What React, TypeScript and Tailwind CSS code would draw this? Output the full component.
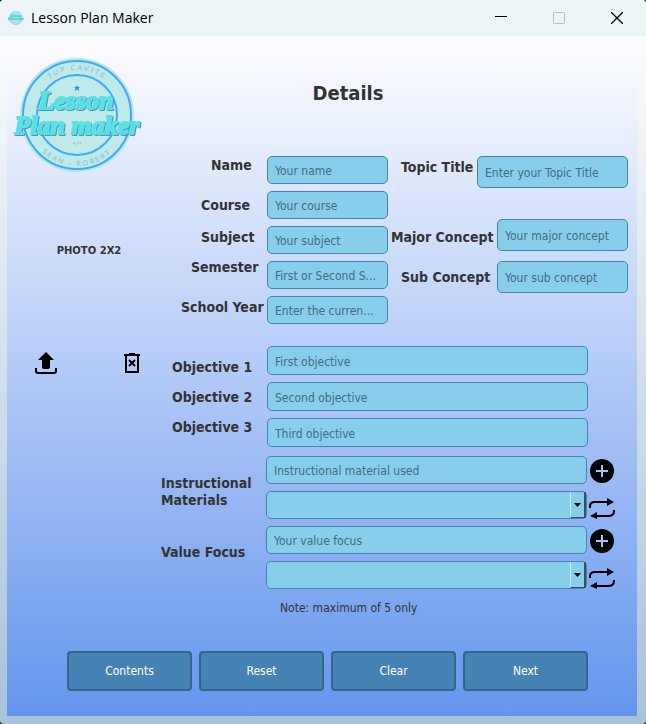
import type { ReactNode } from "react";

const labelText = "font-bold text-[14px] text-[#333333] whitespace-nowrap";
const fieldBox =
  "block w-full min-w-0 rounded-[5px] border border-[#4682b4] bg-[#87ceeb] pl-[7px] pr-1 pt-[2px] text-[12px] text-[#333333] placeholder:text-[#466b7e] placeholder:opacity-100 outline-none";

function Field({ id, hint, size = "h-7" }: { id: string; hint: string; size?: string }) {
  return <input id={id} type="text" placeholder={hint} className={`${fieldBox} ${size}`} />;
}

function Picker({ label }: { label: string }) {
  return (
    <div className="relative w-full">
      <select aria-label={label} className="block h-7 w-full appearance-none rounded-[5px] border border-[#4682b4] bg-[#87ceeb] outline-none" />
      <span className="pointer-events-none absolute right-px top-px flex h-[26px] w-4 items-center justify-center border-b border-l border-r-2 border-b-[#355260] border-l-[#b9ecff] border-r-[#355260]">
        <svg width="7" height="4" viewBox="0 0 7 4">
          <path d="M0 0H7L3.5 4Z" fill="#000" />
        </svg>
      </span>
    </div>
  );
}

function IconButton({ label, children }: { label: string; children: ReactNode }) {
  return (
    <button type="button" aria-label={label} className="flex shrink-0 items-center justify-center">
      {children}
    </button>
  );
}

function PlusIcon() {
  return (
    <svg width="24" height="24" viewBox="0 0 24 24">
      <circle cx="12" cy="12" r="12" fill="#000" />
      <path d="M12 6V18M6 12H18" stroke="#a5c3f5" strokeWidth="2" />
    </svg>
  );
}

function SwapIcon() {
  return (
    <svg width="26" height="22" viewBox="0 0 26 22" fill="none" stroke="#000" strokeWidth="2">
      <path d="M1 11V9Q1 5 6 5H20" />
      <path d="M18 1L25 5L18 9Z" fill="#000" stroke="none" />
      <path d="M25 13V14Q25 19 19 19H6" />
      <path d="M8 15L1 19L8 22Z" fill="#000" stroke="none" />
    </svg>
  );
}

function Logo({ className }: { className: string }) {
  return (
    <svg className={className} viewBox="0 0 130 114" role="img" aria-label="Lesson Plan Maker logo">
      <defs>
        <path id="ringTop" d="M19 57A45 45 0 0 1 109 57" />
        <path id="ringBottom" d="M13 57A51 51 0 0 0 115 57" />
      </defs>
      <circle cx="64" cy="57" r="57" fill="#bce3e6" />
      <circle cx="64" cy="57" r="54" fill="#c0e9ea" stroke="#38aeff" strokeWidth="2" />
      <circle cx="64" cy="57" r="40" fill="#c0e9ea" stroke="#38aeff" strokeWidth="2" />
      <g fill="#8db9d2" fontFamily="Lato, sans-serif" fontSize="7" letterSpacing="2" textAnchor="middle">
        <text><textPath href="#ringTop" startOffset="50%">TUP CAVITE</textPath></text>
        <text><textPath href="#ringBottom" startOffset="50%">SEAN - ROBERT</textPath></text>
      </g>
      <path d="M64 27L65 29H67L65.500 30.500L66 33L64 31.500L62 33L62.500 30.500L61 29H63Z" fill="#2f93da" />
      <text x="64" y="87" textAnchor="middle" fontSize="6" fontFamily="Lato, sans-serif" fill="#7da6c4">&lt;/&gt;</text>
      <g
        className="drop-shadow-[1px_1px_0_#5a93a8]"
        fontFamily="'Liberation Serif', serif"
        fontWeight="bold"
        fontStyle="italic"
        fontSize="26"
        textAnchor="middle"
        fill="#58e1e6"
        stroke="#58e1e6"
        strokeWidth="2"
        strokeLinejoin="round"
      >
        <text x="63" y="51">Lesson</text>
        <text x="64" y="76">Plan maker</text>
      </g>
    </svg>
  );
}

function TitleBar() {
  return (
    <header className="flex h-9 items-center bg-[#ecf4f8] pl-2">
      <Logo className="h-4 w-4" />
      <h1 className="ml-[7px] flex-1 pb-[2px] font-['Open_Sans',sans-serif] text-[14px] text-black">Lesson Plan Maker</h1>
      <button type="button" aria-label="Minimize" className="flex h-8 w-[58px] items-center justify-center">
        <svg width="12" height="12" viewBox="0 0 12 12"><path d="M0 4.500H12" stroke="#000" /></svg>
      </button>
      <button type="button" aria-label="Maximize" disabled className="flex h-8 w-[58px] items-center justify-center">
        <svg width="12" height="12" viewBox="0 0 12 12"><rect x=".5" y=".5" width="11" height="11" rx="1" fill="none" stroke="#b9bfc2" /></svg>
      </button>
      <button type="button" aria-label="Close" className="flex h-8 w-[58px] items-center justify-center">
        <svg width="12" height="12" viewBox="0 0 12 12"><path d="M0 0L12 12M12 0L0 12" stroke="#000" strokeWidth="1.300" /></svg>
      </button>
    </header>
  );
}

function PhotoPanel() {
  return (
    <aside className="w-[154px] shrink-0 pt-3">
      <Logo className="ml-1.5 h-[114px] w-[130px]" />
      <div className="pl-[10px]">
        <p className="mt-[70px] text-center font-['DejaVu_Sans',sans-serif] text-[10px] font-bold leading-[18px] text-[#333333]">PHOTO 2X2</p>
        <div className="mt-[91px] flex justify-center gap-[62px]">
          <IconButton label="Upload photo">
            <svg width="24" height="24" viewBox="0 0 24 24">
              <path d="M12 1L20 9H16V16Q16 18 14 18H10Q8 18 8 16V9H4Z" fill="#000" />
              <path d="M2 17V20Q2 22 4 22H20Q22 22 22 20V17" fill="none" stroke="#000" strokeWidth="2" />
            </svg>
          </IconButton>
          <IconButton label="Delete photo">
            <svg width="24" height="24" viewBox="0 0 24 24" fill="none" stroke="#000" strokeWidth="2">
              <path d="M4 4H20M9 3H15" />
              <path d="M6 4V21H18V4" />
              <path d="M9 9L15 15M15 9L9 15" />
            </svg>
          </IconButton>
        </div>
      </div>
    </aside>
  );
}

function StudentFields() {
  return (
    <div className="flex">
      <div className="flex w-[106px] shrink-0 flex-col pl-5 leading-5">
        <label htmlFor="name" className={`${labelText} pl-[30px]`}>Name</label>
        <label htmlFor="course" className={`${labelText} mt-5 pl-5`}>Course</label>
        <label htmlFor="subject" className={`${labelText} mt-3 pl-5`}>Subject</label>
        <label htmlFor="semester" className={`${labelText} mt-2.5 pl-2.5`}>Semester</label>
        <label htmlFor="year" className={`${labelText} mt-5`}>School Year</label>
      </div>
      <div className="mt-px flex min-w-0 flex-1 flex-col gap-[7px]">
        <Field id="name" hint="Your name" />
        <Field id="course" hint="Your course" />
        <Field id="subject" hint="Your subject" />
        <Field id="semester" hint="First or Second S..." />
        <Field id="year" hint="Enter the curren..." />
      </div>
    </div>
  );
}

function TopicFields() {
  return (
    <div className="pt-px">
      <div className="flex">
        <label htmlFor="topic" className={`${labelText} w-[86px] shrink-0 pl-2.5 leading-[22px]`}>Topic Title</label>
        <Field id="topic" hint="Enter your Topic Title" size="h-8" />
      </div>
      <div className="mt-[31px] flex">
        <label htmlFor="major" className={`${labelText} w-[106px] shrink-0 leading-9`}>Major Concept</label>
        <Field id="major" hint="Your major concept" size="h-8" />
      </div>
      <div className="mt-1.5 flex">
        <label htmlFor="sub" className={`${labelText} w-[106px] shrink-0 pl-2.5 leading-8`}>Sub Concept</label>
        <Field id="sub" hint="Your sub concept" size="h-8" />
      </div>
    </div>
  );
}

function ListInput({ id, hint, list }: { id: string; hint: string; list: string }) {
  return (
    <div className="grid grid-cols-[1fr_30px] gap-y-[7px]">
      <Field id={id} hint={hint} />
      <div className="-mb-[2px] flex h-[30px] items-center justify-center">
        <IconButton label={`Add to ${list}`}><PlusIcon /></IconButton>
      </div>
      <Picker label={list} />
      <div className="flex h-7 items-end justify-center">
        <IconButton label={`Replace in ${list}`}><SwapIcon /></IconButton>
      </div>
    </div>
  );
}

function LessonForm() {
  return (
    <section className="min-w-0 flex-1 pr-[9px]">
      <h2 className="pr-[93px] pt-[35px] text-center text-[20px] font-bold leading-6 text-[#333333]">Details</h2>
      <div className="mt-[50px] grid grid-cols-[227fr_237fr] gap-x-[3px]">
        <StudentFields />
        <TopicFields />
      </div>
      <div className="mt-[22px] flex pr-10">
        <div className="flex w-[106px] shrink-0 flex-col gap-2.5 pl-[11px] pt-[11px] leading-5">
          <label htmlFor="objective1" className={labelText}>Objective 1</label>
          <label htmlFor="objective2" className={labelText}>Objective 2</label>
          <label htmlFor="objective3" className={labelText}>Objective 3</label>
        </div>
        <div className="flex min-w-0 flex-1 flex-col gap-[7px]">
          <Field id="objective1" hint="First objective" size="h-[29px]" />
          <Field id="objective2" hint="Second objective" size="h-[29px]" />
          <Field id="objective3" hint="Third objective" size="h-[29px]" />
        </div>
      </div>
      <div className="mt-[9px] flex pr-[11px]">
        <div className="flex w-[105px] shrink-0 flex-col pt-[19px] leading-[17px]">
          <label htmlFor="materials" className={labelText}>Instructional<br />Materials</label>
          <label htmlFor="focus" className={`${labelText} mt-[35px]`}>Value Focus</label>
        </div>
        <div className="flex min-w-0 flex-1 flex-col gap-[7px]">
          <ListInput id="materials" hint="Instructional material used" list="Instructional materials" />
          <ListInput id="focus" hint="Your value focus" list="Value focus" />
        </div>
      </div>
      <p className="mt-2.5 pl-[119px] text-[12px] leading-[18px] text-[#333333]">Note: maximum of 5 only</p>
    </section>
  );
}

export default function App() {
  return (
    <div className="min-h-screen bg-[#202020]">
      <div className="flex min-h-screen flex-col overflow-hidden rounded-[4px] bg-[linear-gradient(to_bottom,#ffffff,#a8c2d9)] font-['DejaVu_Sans_Condensed','DejaVu_Sans',sans-serif]">
        <TitleBar />
        <main className="mb-2 ml-[7px] mr-[9px] mt-[10px] flex-1 bg-[linear-gradient(to_bottom,#fcfcff,#6495ed)]">
          <form>
            <div className="flex">
              <PhotoPanel />
              <LessonForm />
            </div>
            <div className="mb-6 mt-[34px] grid grid-cols-4 gap-[7px] pl-[60px] pr-[49px]">
              {["Contents", "Reset", "Clear", "Next"].map((name) => (
                <button key={name} type="button" className="h-10 rounded-[4px] border-2 border-[#36648b] bg-[#4682b4] text-[12px] text-white">
                  {name}
                </button>
              ))}
            </div>
          </form>
        </main>
      </div>
    </div>
  );
}
